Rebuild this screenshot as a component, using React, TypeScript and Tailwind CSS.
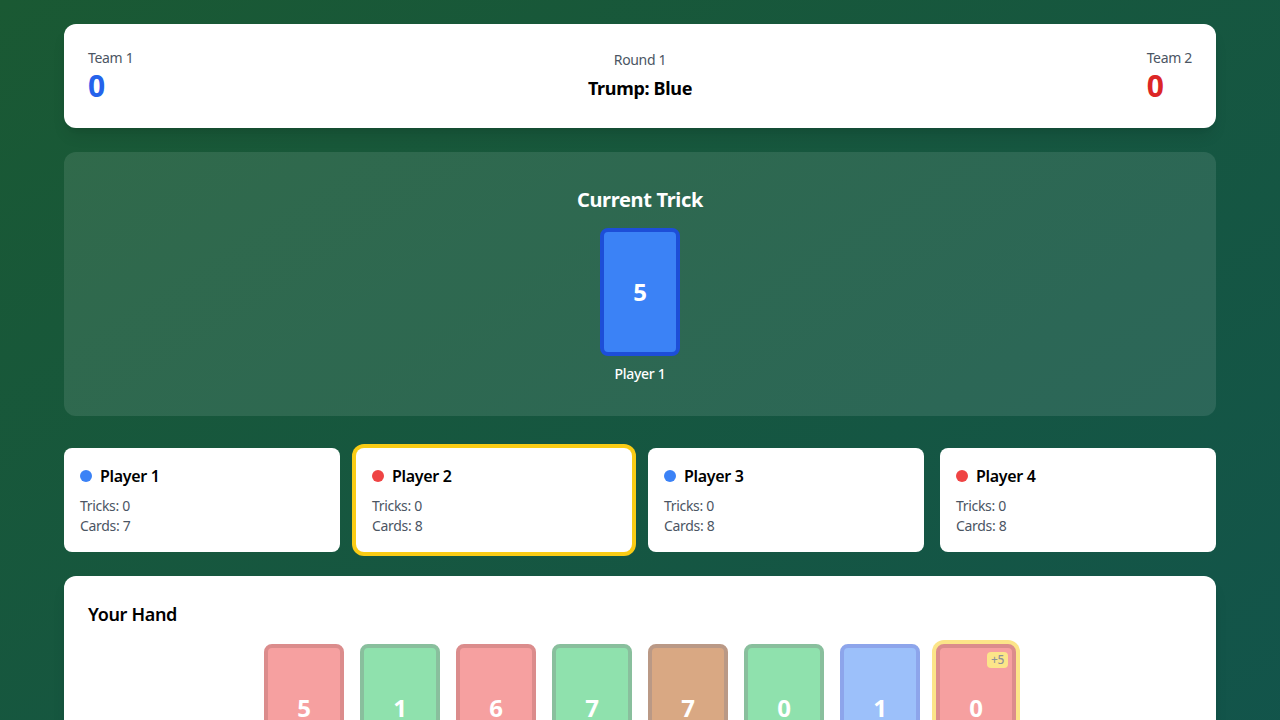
import React from "react";

const players = [
  { name: "Player 1", dot: "bg-[#3b82f6]", tricks: 0, cards: 7, active: false },
  { name: "Player 2", dot: "bg-[#ef4444]", tricks: 0, cards: 8, active: true },
  { name: "Player 3", dot: "bg-[#3b82f6]", tricks: 0, cards: 8, active: false },
  { name: "Player 4", dot: "bg-[#ef4444]", tricks: 0, cards: 8, active: false },
];

const hand = [
  { v: "5", c: "bg-[#ef4444] border-[#b91c1c]" },
  { v: "1", c: "bg-[#22c55e] border-[#15803d]" },
  { v: "6", c: "bg-[#ef4444] border-[#b91c1c]" },
  { v: "7", c: "bg-[#22c55e] border-[#15803d]" },
  { v: "7", c: "bg-[#b45309] border-[#78350f]" },
  { v: "0", c: "bg-[#22c55e] border-[#15803d]" },
  { v: "1", c: "bg-[#3b82f6] border-[#1d4ed8]" },
  { v: "0", c: "bg-[#ef4444] border-[#b91c1c]", special: true },
];

export default function App() {
  return (
    <div
      className="min-h-screen bg-gradient-to-br from-[#1a5933] to-[#12544c] px-16 py-6"
      style={{ fontFamily: '"Noto Sans", "Open Sans", sans-serif', letterSpacing: "-0.02em" }}
    >
      <div className="flex flex-col gap-6">
        {/* Scoreboard */}
        <div className="bg-white rounded-xl shadow-lg p-6 flex items-center justify-between">
          <div>
            <div className="text-sm leading-5 text-[#4b5563]">Team 1</div>
            <div className="text-3xl leading-9 font-bold text-[#2563eb]">0</div>
          </div>
          <div className="text-center">
            <div className="text-sm leading-5 text-[#4b5563]">Round 1</div>
            <div className="text-lg leading-7 font-bold text-black mt-1">Trump: Blue</div>
          </div>
          <div className="text-right">
            <div className="text-sm leading-5 text-[#4b5563]">Team 2</div>
            <div className="text-3xl leading-9 font-bold text-[#dc2626] text-left">0</div>
          </div>
        </div>

        {/* Trick */}
        <div className="bg-white/10 rounded-xl px-8 pt-[34px] pb-8 flex flex-col items-center">
          <div className="text-xl leading-7 font-bold text-white mb-[14px]">Current Trick</div>
          <div className="w-20 h-32 rounded-lg bg-[#3b82f6] border-4 border-[#1d4ed8] flex items-center justify-center text-2xl font-bold text-white">
            5
          </div>
          <div className="text-sm leading-5 text-white font-medium mt-2">Player 1</div>
        </div>

        {/* Players */}
        <div className="grid grid-cols-4 gap-4 mt-2">
          {players.map((p) => (
            <div
              key={p.name}
              className={`bg-white rounded-lg p-4 ${p.active ? "ring-4 ring-[#facc15]" : ""}`}
            >
              <div className="flex items-center gap-2">
                <span className={`w-3 h-3 rounded-full ${p.dot}`} />
                <span className="text-base leading-6 font-semibold text-black">{p.name}</span>
              </div>
              <div className="mt-2 text-sm leading-5 text-[#4b5563]">Tricks: {p.tricks}</div>
              <div className="text-sm leading-5 text-[#4b5563]">Cards: {p.cards}</div>
            </div>
          ))}
        </div>

        {/* Hand */}
        <div className="bg-white rounded-xl shadow-lg p-6">
          <div className="text-lg leading-7 font-semibold text-black mb-4">Your Hand</div>
          <div className="flex justify-center gap-4">
            {hand.map((h, i) => (
              <div
                key={i}
                className={`relative w-20 h-32 rounded-lg border-4 opacity-50 flex items-center justify-center text-2xl font-bold text-white ${h.c} ${h.special ? "ring-4 ring-[#facc15]" : ""}`}
              >
                {h.v}
                {h.special && (
                  <span className="absolute top-1 right-1 bg-[#facc15] text-[#1f2937] text-xs leading-4 px-1 rounded font-medium">
                    +5
                  </span>
                )}
              </div>
            ))}
          </div>
        </div>
      </div>
    </div>
  );
}
